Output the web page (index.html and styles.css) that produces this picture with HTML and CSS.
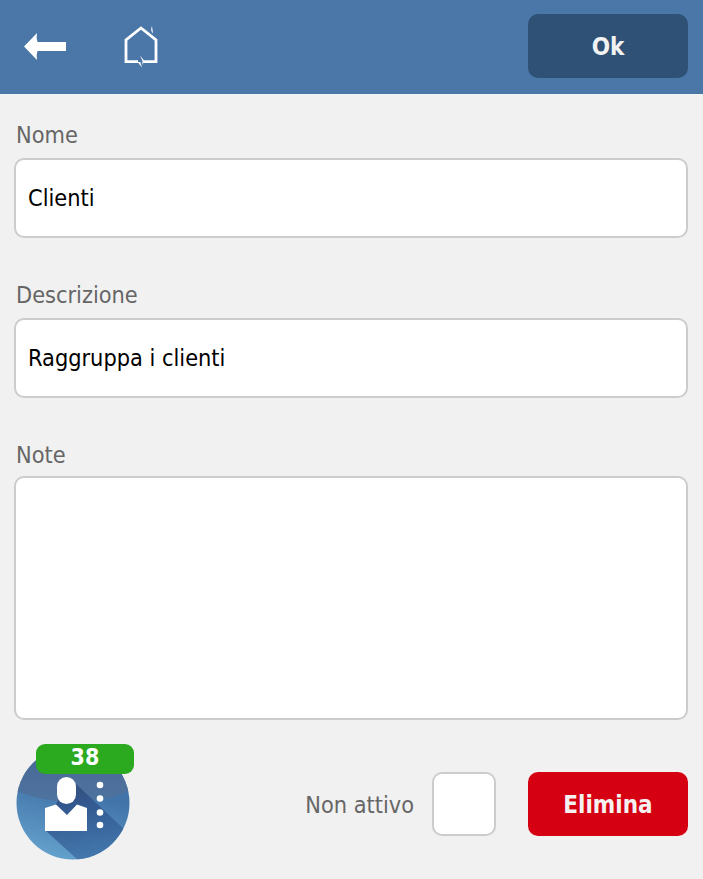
FILE: index.html
```html
<!DOCTYPE html>
<html lang="it">
<head>
<meta charset="utf-8">
<title>Gruppo</title>
<link rel="stylesheet" href="styles.css">
</head>
<body>
<header class="topbar">
  <div class="nav">
    <button class="icon-btn" aria-label="Indietro">
      <svg width="44" height="34" viewBox="0 0 44 34"><path d="M1 16.500 L14 3 Q13 8 14.500 12 L43 12 L43 21 L14.500 21 Q13 25 14 30 Z" fill="#fff"/></svg>
    </button>
    <button class="icon-btn" aria-label="Home">
      <svg width="36" height="46" viewBox="0 0 36 46"><path d="M15 37.600 H3 V16 L18 4 L33 16 V37.600 H20.500" fill="none" stroke="#fff" stroke-width="2.800"/><path d="M29 2 L30 9.500 Q27 6.500 29 2 Z" fill="#fff"/><path d="M14.500 38 L19 43.500 L17.300 38 Z M17 31.500 L21.500 37 L19.300 41 L19.500 37 Z" fill="#fff"/></svg>
    </button>
  </div>
  <button class="btn btn-ok">Ok</button>
</header>
<main class="form">
  <div class="field">
    <label class="label" for="nome">Nome</label>
    <input class="input" id="nome" type="text" value="Clienti">
  </div>
  <div class="field">
    <label class="label" for="descrizione">Descrizione</label>
    <input class="input" id="descrizione" type="text" value="Raggruppa i clienti">
  </div>
  <div class="field field-note">
    <label class="label" for="note">Note</label>
    <textarea class="input area" id="note"></textarea>
  </div>
  <div class="footer">
    <div class="badge-wrap">
      <svg class="avatar" width="114" height="114" viewBox="0 0 114 114">
        <defs>
          <linearGradient id="gTop" x1="0" y1="0" x2="0" y2="1"><stop offset="0" stop-color="#466794"/><stop offset="1" stop-color="#4f739f"/></linearGradient>
          <linearGradient id="gBot" x1="0.500" y1="0.400" x2="0.350" y2="1"><stop offset="0" stop-color="#4274aa"/><stop offset="1" stop-color="#65a2cd"/></linearGradient>
          <linearGradient id="gShadow" gradientUnits="userSpaceOnUse" x1="50" y1="50" x2="80" y2="114"><stop offset="0" stop-color="#2c4a80" stop-opacity=".8"/><stop offset="1" stop-color="#2f5f9a" stop-opacity=".55"/></linearGradient>
          <clipPath id="disc"><circle cx="57" cy="57" r="56.500"/></clipPath>
        </defs>
        <g clip-path="url(#disc)">
          <rect width="114" height="114" fill="url(#gBot)"/>
          <path d="M0 45 Q57 67 114 45 V0 H0 Z" fill="url(#gTop)"/>
          <path d="M60 38 L110 85 L114 114 H62 L29 84 L41 56 Z" fill="url(#gShadow)"/>
        </g>
        <rect x="41" y="31" width="19" height="27" rx="9.500" fill="#fff"/>
        <path d="M29 62 L40 58.500 L51 69 L61 58.500 L71 62 V85 H29 Z" fill="#fff"/>
        <circle cx="84" cy="39" r="3.300" fill="#fff"/>
        <circle cx="84" cy="52.500" r="3.300" fill="#fff"/>
        <circle cx="84" cy="66.500" r="3.300" fill="#fff"/>
        <circle cx="84" cy="79" r="3.300" fill="#fff"/>
      </svg>
      <span class="count">38</span>
    </div>
    <div class="actions">
      <label class="check-label" for="attivo">Non attivo</label>
      <span class="check" id="attivo"></span>
      <button class="btn btn-delete">Elimina</button>
    </div>
  </div>
</main>
</body>
</html>
```
FILE: styles.css
```css
* { box-sizing: border-box; }
html, body { margin: 0; padding: 0; }
body {
  width: 703px;
  height: 879px;
  background: #f1f1f1;
  font-family: "DejaVu Sans Condensed", "DejaVu Sans", sans-serif;
  overflow: hidden;
}
.topbar {
  height: 94px;
  background: #4a76a8;
  display: flex;
  align-items: flex-start;
  justify-content: space-between;
  padding: 14px 15px 0 23px;
}
.nav { display: flex; align-items: flex-start; gap: 56px; padding-top: 10px; }
.icon-btn {
  background: none;
  border: 0;
  padding: 0;
  display: block;
  line-height: 0;
}
.icon-btn:first-child { margin-top: 6px; }
.btn {
  width: 160px;
  height: 64px;
  border: 0;
  color: #f2f2f2;
  font-family: inherit;
  font-weight: 700;
  font-size: 24px;
  border-radius: 10px;
  padding: 2px 0 0;
}
.btn-ok { background: #2f5175; }
.btn-delete { background: #d50012; color: #f6f1f1; }
.form { padding: 0 15px 0 14px; }
.field { display: flex; flex-direction: column; }
.label {
  height: 40px;
  margin-top: 40px;
  line-height: 34px;
  padding-left: 2px;
  color: #666666;
  font-size: 23.300px;
}
.field:first-child .label { margin-top: 24px; }
.field-note .label { margin-top: 38px; line-height: 38px; }
.input {
  display: block;
  width: 100%;
  height: 80px;
  border: 2px solid #cccccc;
  border-radius: 10px;
  background: #fff;
  color: #000;
  font-family: inherit;
  font-size: 23.300px;
  padding: 0 12px 1px;
  margin: 0;
  outline: none;
}
.area { height: 244px; resize: none; }
.footer {
  display: flex;
  justify-content: space-between;
  align-items: flex-start;
  margin-top: 24px;
}
.badge-wrap { position: relative; width: 122px; height: 117px; }
.avatar { position: absolute; left: 2px; top: 2px; }
.count {
  position: absolute;
  left: 22px;
  top: 0;
  width: 98px;
  height: 30px;
  background: #2ba91f;
  color: #fff;
  border-radius: 9px;
  text-align: center;
  font-weight: 700;
  font-size: 23px;
  line-height: 27px;
}
.actions {
  display: flex;
  align-items: center;
  margin-top: 28px;
}
.check-label { color: #666666; font-size: 23.300px; margin: 0 18px 0 0; }
.check {
  width: 64px;
  height: 64px;
  background: #fff;
  border: 2px solid #cccccc;
  border-radius: 10px;
  margin-right: 32px;
}
```
